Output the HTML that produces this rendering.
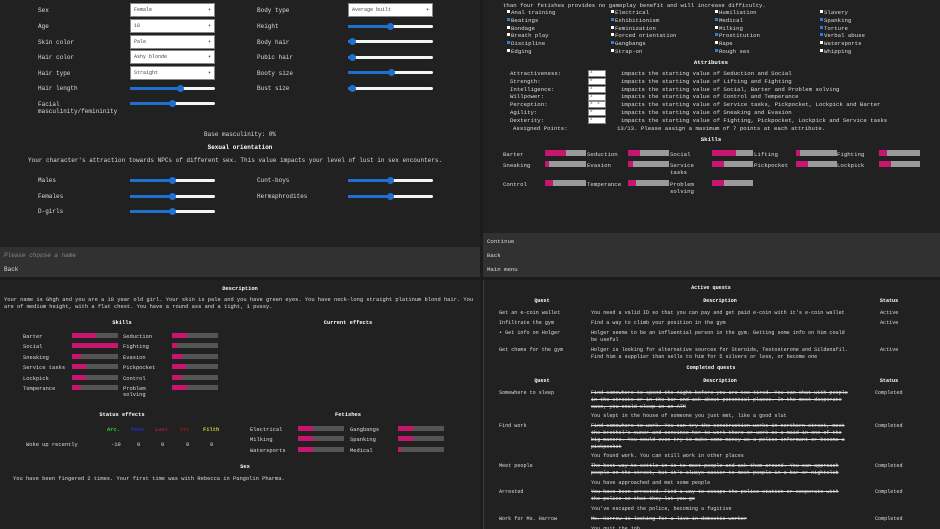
<!DOCTYPE html>
<html><head><meta charset="utf-8"><style>
*{margin:0;padding:0;box-sizing:border-box}
body{width:940px;height:529px;overflow:hidden;background:#1c1c1c;font-family:"Liberation Mono",monospace;font-size:6px;line-height:7px;color:#ddd;position:relative}
.p{position:absolute;background:#212121;overflow:hidden}
.t{position:absolute;white-space:nowrap}
.c{position:absolute;white-space:nowrap;transform:translateX(-50%);font-weight:bold;color:#fff}
.sel{position:absolute;width:85px;height:14px;background:#fff;border:1px solid #888;color:#444;font-size:5px;padding:3px 3px;line-height:7px}
.sel:after{content:"▾";position:absolute;right:3px;top:3px;color:#333}
.sl{position:absolute;width:85px;height:3px;background:#f4f4f4;border-radius:2px}
.sl i{position:absolute;left:0;top:0;height:3px;background:#1f6fd0;border-radius:2px}
.sl b{position:absolute;top:-2px;width:7px;height:7px;border-radius:50%;background:#1f6fd0;margin-left:-3px}
.bar{position:absolute;width:41px;height:6px;background:#9a9a9a}
.bar i{position:absolute;left:0;top:0;height:6px;background:#c8156f}
.bb{position:absolute;width:46px;height:5px;background:#555}
.bb i{position:absolute;left:0;top:0;height:5px;background:#c8156f}
.cb{display:inline-block;width:3px;height:3px;background:#fff;margin-right:1px;vertical-align:1px}
.cb.k{background:#2a7de1}
.in{position:absolute;width:18px;height:7px;background:#fff;border:1px solid #888;color:#555;font-size:4px;line-height:5px;padding-left:1px}
.s{text-decoration:line-through}
#tr{font-size:5.7px}
#bl{font-size:5.4px}
#br{font-size:5.1px}
</style></head><body>

<!-- TOP LEFT -->
<div class="p" style="left:0;top:0;width:480px;height:277px">
<div class="t" style="left:38px;top:7px">Sex</div><div class="sel" style="left:130px;top:3px">Female</div>
<div class="t" style="left:38px;top:23px">Age</div><div class="sel" style="left:130px;top:19px">18</div>
<div class="t" style="left:38px;top:39px">Skin color</div><div class="sel" style="left:130px;top:35px">Pale</div>
<div class="t" style="left:38px;top:54px">Hair color</div><div class="sel" style="left:130px;top:50px">Ashy blonde</div>
<div class="t" style="left:38px;top:70px">Hair type</div><div class="sel" style="left:130px;top:66px">Straight</div>
<div class="t" style="left:38px;top:85px">Hair length</div><div class="sl" style="left:130px;top:87px"><i style="width:50px"></i><b style="left:50px"></b></div>
<div class="t" style="left:38px;top:101px">Facial<br>masculinity/femininity</div><div class="sl" style="left:130px;top:102px"><i style="width:42px"></i><b style="left:42px"></b></div>
<div class="t" style="left:257px;top:7px">Body type</div><div class="sel" style="left:348px;top:3px">Average built</div>
<div class="t" style="left:257px;top:23px">Height</div><div class="sl" style="left:348px;top:25px"><i style="width:42px"></i><b style="left:42px"></b></div>
<div class="t" style="left:257px;top:39px">Body hair</div><div class="sl" style="left:348px;top:40px"><i style="width:4px"></i><b style="left:4px"></b></div>
<div class="t" style="left:257px;top:54px">Pubic hair</div><div class="sl" style="left:348px;top:56px"><i style="width:4px"></i><b style="left:4px"></b></div>
<div class="t" style="left:257px;top:70px">Booty size</div><div class="sl" style="left:348px;top:71px"><i style="width:43px"></i><b style="left:43px"></b></div>
<div class="t" style="left:257px;top:85px">Bust size</div><div class="sl" style="left:348px;top:87px"><i style="width:4px"></i><b style="left:4px"></b></div>
<div class="c" style="left:240px;top:131px;font-weight:normal;color:#ddd">Base masculinity: 0%</div>
<div class="c" style="left:240px;top:144px">Sexual orientation</div>
<div class="t" style="left:28px;top:157px">Your character's attraction towards NPCs of different sex. This value impacts your level of lust in sex encounters.</div>
<div class="t" style="left:38px;top:177px">Males</div><div class="sl" style="left:130px;top:179px"><i style="width:42px"></i><b style="left:42px"></b></div>
<div class="t" style="left:38px;top:193px">Females</div><div class="sl" style="left:130px;top:195px"><i style="width:42px"></i><b style="left:42px"></b></div>
<div class="t" style="left:38px;top:208px">D-girls</div><div class="sl" style="left:130px;top:210px"><i style="width:42px"></i><b style="left:42px"></b></div>
<div class="t" style="left:257px;top:177px">Cunt-boys</div><div class="sl" style="left:348px;top:179px"><i style="width:42px"></i><b style="left:42px"></b></div>
<div class="t" style="left:257px;top:193px">Hermaphrodites</div><div class="sl" style="left:348px;top:195px"><i style="width:42px"></i><b style="left:42px"></b></div>
<div style="position:absolute;left:0;top:247px;width:480px;height:30px;background:#313131"></div>
<div class="t" style="left:4px;top:252px;color:#888;font-style:italic">Please choose a name</div>
<div class="t" style="left:4px;top:266px;color:#dde">Back</div>
</div>

<!-- TOP RIGHT -->
<div class="p" id="tr" style="left:483px;top:0;width:457px;height:277px">
<div class="t" style="left:20px;top:2px">than four fetishes provides no gameplay benefit and will increase difficulty.</div>
<div class="t" style="left:24px;top:9px;line-height:7.8px"><span class="cb"></span>Anal training<br><span class="cb k"></span>Beatings<br><span class="cb"></span>Bondage<br><span class="cb"></span>Breath play<br><span class="cb k"></span>Discipline<br><span class="cb"></span>Edging</div>
<div class="t" style="left:128px;top:9px;line-height:7.8px"><span class="cb"></span>Electrical<br><span class="cb k"></span>Exhibitionism<br><span class="cb"></span>Feminization<br><span class="cb"></span>Forced orientation<br><span class="cb k"></span>Gangbangs<br><span class="cb"></span>Strap-on</div>
<div class="t" style="left:232px;top:9px;line-height:7.8px"><span class="cb"></span>Humiliation<br><span class="cb k"></span>Medical<br><span class="cb"></span>Milking<br><span class="cb k"></span>Prostitution<br><span class="cb"></span>Rape<br><span class="cb k"></span>Rough sex</div>
<div class="t" style="left:337px;top:9px;line-height:7.8px"><span class="cb"></span>Slavery<br><span class="cb k"></span>Spanking<br><span class="cb k"></span>Torture<br><span class="cb k"></span>Verbal abuse<br><span class="cb"></span>Watersports<br><span class="cb"></span>Whipping</div>
<div class="c" style="left:228px;top:59px">Attributes</div>
<div class="t" style="left:27px;top:70px;line-height:7.8px">Attractiveness:<br>Strength:<br>Intelligence:<br>Willpower:<br>Perception:<br>Agility:<br>Dexterity:</div>
<div class="in" style="left:105px;top:70px">3</div><div class="in" style="left:105px;top:78px">0</div><div class="in" style="left:105px;top:86px">3</div><div class="in" style="left:105px;top:94px">3</div><div class="in" style="left:105px;top:101px">3 &nbsp;4</div><div class="in" style="left:105px;top:109px">0</div><div class="in" style="left:105px;top:117px">3</div>
<div class="t" style="left:138px;top:70px;line-height:7.8px">impacts the starting value of Seduction and Social<br>impacts the starting value of Lifting and Fighting<br>impacts the starting value of Social, Barter and Problem solving<br>impacts the starting value of Control and Temperance<br>impacts the starting value of Service tasks, Pickpocket, Lockpick and Barter<br>impacts the starting value of Sneaking and Evasion<br>impacts the starting value of Fighting, Pickpocket, Lockpick and Service tasks</div>
<div class="t" style="left:30px;top:125px">Assigned Points:</div>
<div class="t" style="left:134px;top:125px">13/13. Please assign a maximum of 7 points at each attribute.</div>
<div class="c" style="left:228px;top:136px">Skills</div>
<div class="t" style="left:20px;top:151px">Barter</div><div class="bar" style="left:62px;top:150px"><i style="width:21px"></i></div>
<div class="t" style="left:104px;top:151px">Seduction</div><div class="bar" style="left:145px;top:150px"><i style="width:12px"></i></div>
<div class="t" style="left:187px;top:151px">Social</div><div class="bar" style="left:229px;top:150px"><i style="width:24px"></i></div>
<div class="t" style="left:271px;top:151px">Lifting</div><div class="bar" style="left:313px;top:150px"><i style="width:4px"></i></div>
<div class="t" style="left:354px;top:151px">Fighting</div><div class="bar" style="left:396px;top:150px"><i style="width:8px"></i></div>
<div class="t" style="left:20px;top:162px">Sneaking</div><div class="bar" style="left:62px;top:161px"><i style="width:4px"></i></div>
<div class="t" style="left:104px;top:162px">Evasion</div><div class="bar" style="left:145px;top:161px"><i style="width:5px"></i></div>
<div class="t" style="left:187px;top:162px">Service<br>tasks</div><div class="bar" style="left:229px;top:161px"><i style="width:12px"></i></div>
<div class="t" style="left:271px;top:162px">Pickpocket</div><div class="bar" style="left:313px;top:161px"><i style="width:12px"></i></div>
<div class="t" style="left:354px;top:162px">Lockpick</div><div class="bar" style="left:396px;top:161px"><i style="width:12px"></i></div>
<div class="t" style="left:20px;top:181px">Control</div><div class="bar" style="left:62px;top:180px"><i style="width:8px"></i></div>
<div class="t" style="left:104px;top:181px">Temperance</div><div class="bar" style="left:145px;top:180px"><i style="width:8px"></i></div>
<div class="t" style="left:187px;top:181px">Problem<br>solving</div><div class="bar" style="left:229px;top:180px"><i style="width:12px"></i></div>
<div style="position:absolute;left:0;top:233px;width:457px;height:44px;background:#313131"></div>
<div class="t" style="left:4px;top:238px">Continue</div>
<div class="t" style="left:4px;top:252px">Back</div>
<div class="t" style="left:4px;top:266px">Main menu</div>
</div>

<!-- BOTTOM LEFT -->
<div class="p" id="bl" style="left:0;top:280px;width:480px;height:249px">
<div class="c" style="left:240px;top:6px">Description</div>
<div class="t" style="left:4px;top:17px">Your name is Ghgh and you are a 18 year old girl. Your skin is pale and you have green eyes. You have neck-long straight platinum blond hair. You<br>are of medium height, with a flat chest. You have a round ass and a tight, 1 pussy.</div>
<div class="c" style="left:122px;top:40px">Skills</div>
<div class="c" style="left:348px;top:40px">Current effects</div>
<div class="t" style="left:23px;top:52px;line-height:10.4px">Barter<br>Social<br>Sneaking<br>Service tasks<br>Lockpick<br>Temperance</div>
<div class="t" style="left:123px;top:52px;line-height:10.4px">Seduction<br>Fighting<br>Evasion<br>Pickpocket<br>Control<br>Problem</div>
<div class="t" style="left:123px;top:112px">solving</div>
<div class="bb" style="left:72px;top:53px"><i style="width:24px"></i></div>
<div class="bb" style="left:72px;top:63px"><i style="width:46px"></i></div>
<div class="bb" style="left:72px;top:74px"><i style="width:9px"></i></div>
<div class="bb" style="left:72px;top:84px"><i style="width:14px"></i></div>
<div class="bb" style="left:72px;top:95px"><i style="width:14px"></i></div>
<div class="bb" style="left:72px;top:105px"><i style="width:9px"></i></div>
<div class="bb" style="left:172px;top:53px"><i style="width:15px"></i></div>
<div class="bb" style="left:172px;top:63px"><i style="width:5px"></i></div>
<div class="bb" style="left:172px;top:74px"><i style="width:10px"></i></div>
<div class="bb" style="left:172px;top:84px"><i style="width:14px"></i></div>
<div class="bb" style="left:172px;top:95px"><i style="width:10px"></i></div>
<div class="bb" style="left:172px;top:105px"><i style="width:15px"></i></div>
<div class="c" style="left:122px;top:132px">Status effects</div>
<div class="t" style="left:107px;top:147px;color:#3c3;font-weight:bold">Arc.</div>
<div class="t" style="left:131px;top:147px;color:#2230c8;font-weight:bold">Pain</div>
<div class="t" style="left:155px;top:147px;color:#a0224a;font-weight:bold">Lust</div>
<div class="t" style="left:180px;top:147px;color:#8a1a1a;font-weight:bold">Str.</div>
<div class="t" style="left:203px;top:147px;color:#cc3;font-weight:bold">Filth</div>
<div class="t" style="left:26px;top:162px">Woke up recently</div>
<div class="t" style="left:111px;top:162px">-10</div><div class="t" style="left:137px;top:162px">0</div><div class="t" style="left:161px;top:162px">0</div><div class="t" style="left:186px;top:162px">0</div><div class="t" style="left:210px;top:162px">0</div>
<div class="c" style="left:348px;top:132px">Fetishes</div>
<div class="t" style="left:250px;top:145px;line-height:10.4px">Electrical<br>Milking<br>Watersports</div>
<div class="t" style="left:350px;top:145px;line-height:10.4px">Gangbangs<br>Spanking<br>Medical</div>
<div class="bb" style="left:298px;top:146px"><i style="width:15px"></i></div>
<div class="bb" style="left:298px;top:156px"><i style="width:15px"></i></div>
<div class="bb" style="left:298px;top:167px"><i style="width:15px"></i></div>
<div class="bb" style="left:398px;top:146px"><i style="width:15px"></i></div>
<div class="bb" style="left:398px;top:156px"><i style="width:15px"></i></div>
<div class="bb" style="left:398px;top:167px"><i style="width:3px"></i></div>
<div class="c" style="left:245px;top:184px">Sex</div>
<div class="t" style="left:13px;top:196px">You have been fingered 2 times. Your first time was with Rebecca in Pangolin Pharma.</div>
</div>

<!-- BOTTOM RIGHT -->
<div class="p" id="br" style="left:483px;top:280px;width:457px;height:249px">
<div style="position:absolute;left:0;top:0;width:1px;height:249px;background:#3a3a3a"></div>
<div class="c" style="left:228px;top:5px">Active quests</div>
<div class="c" style="left:59px;top:18px">Quest</div><div class="c" style="left:237px;top:18px">Description</div><div class="c" style="left:406px;top:18px">Status</div>
<div class="t" style="left:16px;top:30px">Get an e-coin wallet</div><div class="t" style="left:108px;top:30px">You need a valid ID so that you can pay and get paid e-coin with it's e-coin wallet</div><div class="t" style="left:397px;top:30px">Active</div>
<div class="t" style="left:16px;top:40px">Infiltrate the gym</div><div class="t" style="left:108px;top:40px">Find a way to climb your position in the gym</div><div class="t" style="left:397px;top:40px">Active</div>
<div class="t" style="left:16px;top:50px">• Get info on Holger</div><div class="t" style="left:108px;top:50px">Holger seems to be an influential person in the gym. Getting some info on him could<br>be useful</div>
<div class="t" style="left:16px;top:67px">Get chems for the gym</div><div class="t" style="left:108px;top:67px">Holger is looking for alternative sources for Steroids, Testosterone and Sildenafil.<br>Find him a supplier than sells to him for 5 silvers or less, or become one</div><div class="t" style="left:397px;top:67px">Active</div>
<div class="c" style="left:228px;top:85px">Completed quests</div>
<div class="c" style="left:59px;top:98px">Quest</div><div class="c" style="left:237px;top:98px">Description</div><div class="c" style="left:406px;top:98px">Status</div>
<div class="t" style="left:16px;top:110px">Somewhere to sleep</div><div class="t s" style="left:108px;top:110px">Find somewhere to spend the night before you are too tired. You can chat with people<br>in the streets or in the bar and ask about potential places. In the most desperate<br>case, you could sleep in an ATM</div><div class="t" style="left:392px;top:110px">Completed</div>
<div class="t" style="left:108px;top:133px">You slept in the house of someone you just met, like a good slut</div>
<div class="t" style="left:16px;top:143px">Find work</div><div class="t s" style="left:108px;top:143px">Find somewhere to work. You can try the construction works in northern street, meet<br>the brothel's owner and convince her to work there or work as a maid in one of the<br>big manors. You could even try to make some money as a police informant or become a<br>pickpocket</div><div class="t" style="left:392px;top:143px">Completed</div>
<div class="t" style="left:108px;top:173px">You found work. You can still work in other places</div>
<div class="t" style="left:16px;top:183px">Meet people</div><div class="t s" style="left:108px;top:183px">The best way to settle in is to meet people and ask them around. You can approach<br>people on the street, but it's always easier to meet people in a bar or nightclub</div><div class="t" style="left:392px;top:183px">Completed</div>
<div class="t" style="left:108px;top:200px">You have approached and met some people</div>
<div class="t" style="left:16px;top:209px">Arrested</div><div class="t s" style="left:108px;top:209px">You have been arrested. Find a way to escape the police station or cooperate with<br>the police so that they let you go</div><div class="t" style="left:392px;top:209px">Completed</div>
<div class="t" style="left:108px;top:226px">You've escaped the police, becoming a fugitive</div>
<div class="t" style="left:16px;top:236px">Work for Ms. Harrow</div><div class="t s" style="left:108px;top:236px">Ms. Harrow is looking for a live-in domestic worker</div><div class="t" style="left:392px;top:236px">Completed</div>
<div class="t" style="left:108px;top:246px">You quit the job</div>
</div>
</body></html>
